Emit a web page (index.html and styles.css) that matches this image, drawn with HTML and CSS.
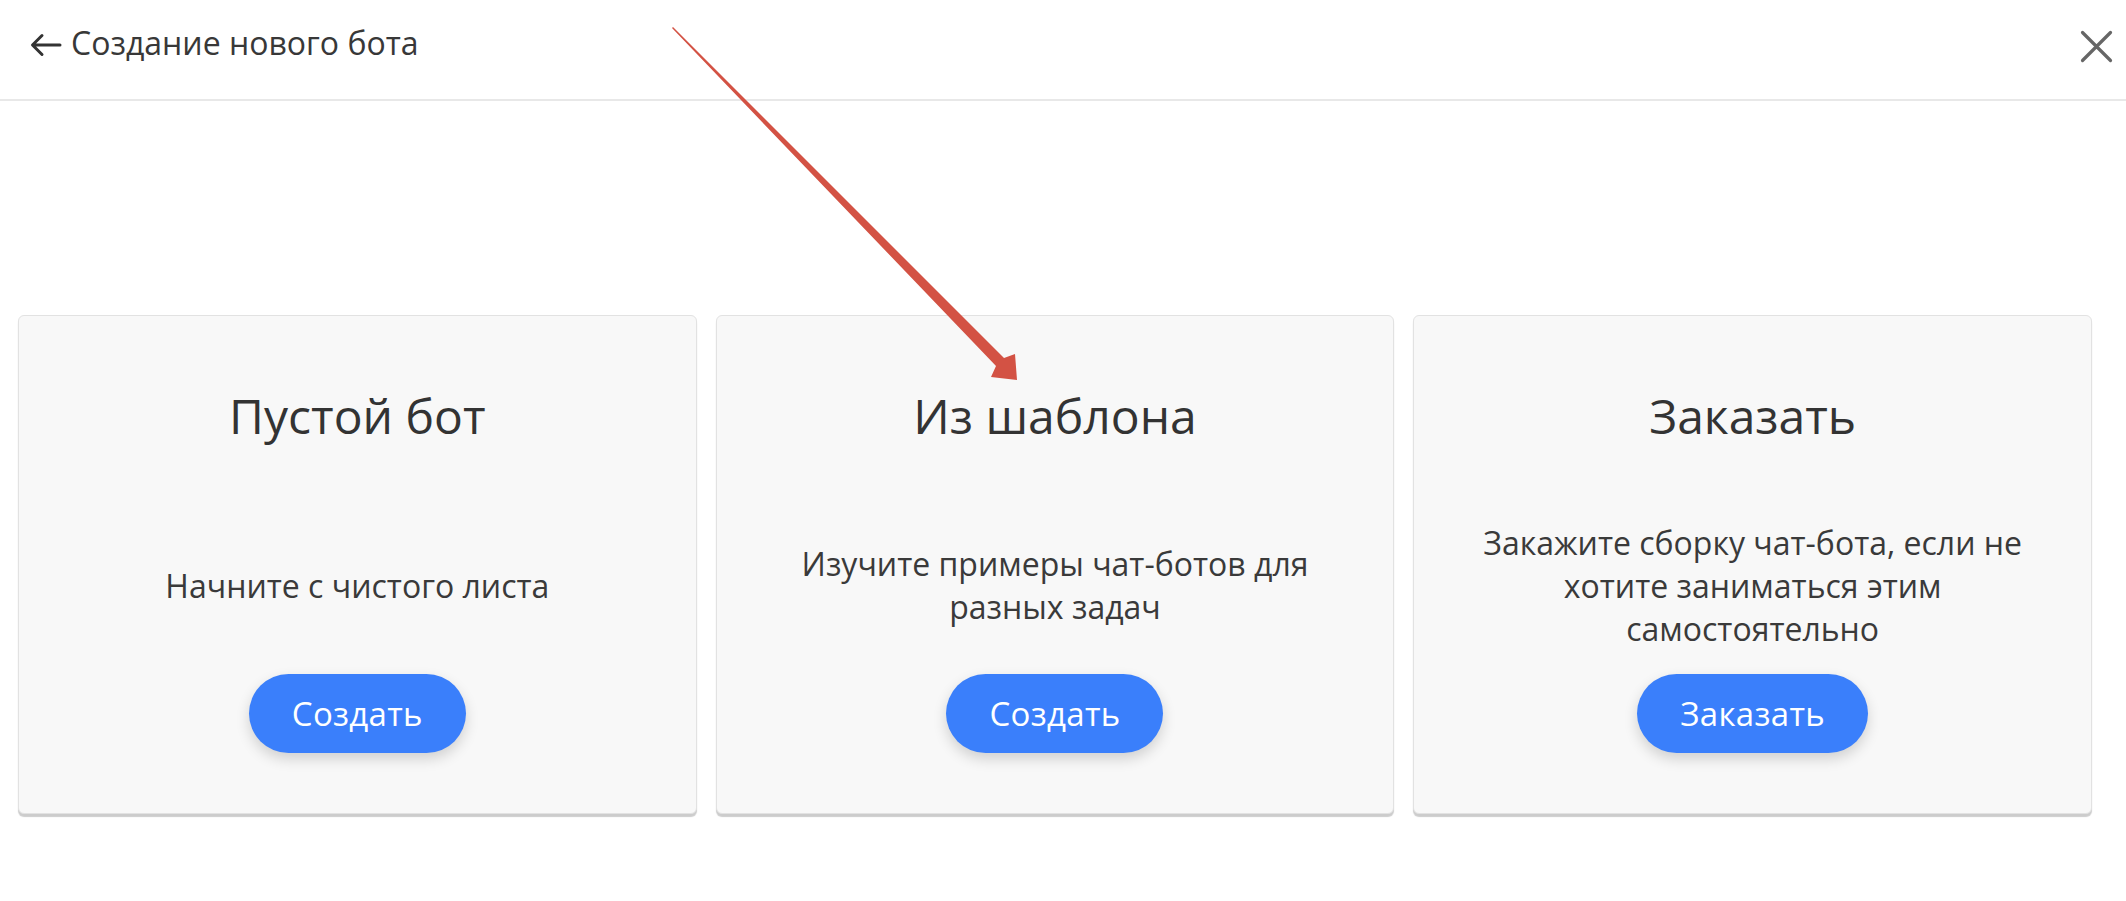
FILE: index.html
```html
<!DOCTYPE html>
<html lang="ru">
<head>
<meta charset="utf-8">
<title>Создание нового бота</title>
<link rel="stylesheet" href="styles.css">
</head>
<body>
<header class="topbar">
  <div class="back">
    <svg class="back-icon" width="32" height="24" viewBox="0 0 32 24" aria-hidden="true">
      <path d="M30 12H3M12 2.5L2.5 12L12 21.5" fill="none" stroke="#333" stroke-width="3" stroke-linecap="round" stroke-linejoin="round"/>
    </svg>
    <span class="back-title">Создание нового бота</span>
  </div>
  <svg class="close-icon" width="33" height="33" viewBox="0 0 33 33" aria-hidden="true">
    <path d="M2.5 2.5L30.5 30.5M30.5 2.5L2.5 30.5" fill="none" stroke="#666" stroke-width="3.2" stroke-linecap="round"/>
  </svg>
</header>
<main class="content">
  <div class="cards">
    <section class="card">
      <h2 class="card-title">Пустой бот</h2>
      <div class="card-body"><p class="card-text">Начните с чистого листа</p></div>
      <button class="card-btn">Создать</button>
    </section>
    <section class="card">
      <h2 class="card-title">Из шаблона</h2>
      <div class="card-body"><p class="card-text">Изучите примеры чат-ботов для<br>разных задач</p></div>
      <button class="card-btn">Создать</button>
    </section>
    <section class="card">
      <h2 class="card-title">Заказать</h2>
      <div class="card-body"><p class="card-text">Закажите сборку чат-бота, если не<br>хотите заниматься этим<br>самостоятельно</p></div>
      <button class="card-btn">Заказать</button>
    </section>
  </div>
</main>
<svg class="annotation" width="2126" height="901" viewBox="0 0 2126 901" aria-hidden="true">
  <polygon points="673,27 1004,358 1015,354 1017,380 991,377 996,366 672,28" fill="#d35244"/>
</svg>
</body>
</html>
```

FILE: styles.css
```css
* { box-sizing: border-box; }
html, body { margin: 0; padding: 0; }
body {
  background: #ffffff;
  font-family: "Open Sans", "Noto Sans", sans-serif;
  color: #333333;
  width: 2126px;
  height: 901px;
  overflow: hidden;
  position: relative;
}
.topbar {
  height: 101px;
  border-bottom: 2px solid #e8e8e8;
  display: flex;
  justify-content: space-between;
  align-items: flex-start;
  padding: 0 13px 0 30px;
}
.back {
  display: flex;
  align-items: center;
  gap: 9px;
  padding-top: 21px;
}
.back-icon { display: block; margin-top: 3px; }
.back-title {
  font-size: 32px;
  line-height: 44px;
  color: #383838;
}
.close-icon { display: block; margin-top: 30px; }
.content {
  padding: 214px 34px 0 18px;
}
.cards {
  display: grid;
  grid-template-columns: repeat(3, 1fr);
  gap: 19px;
}
.card {
  height: 499px;
  background: #f8f8f8;
  border: 1px solid #e2e2e2;
  border-radius: 6px;
  box-shadow: 0 3px 1px rgba(0, 0, 0, 0.2);
  display: flex;
  flex-direction: column;
  align-items: center;
  padding: 72px 20px 60px;
  text-align: center;
}
.card-title {
  margin: 0;
  font-size: 48px;
  font-weight: 400;
  line-height: 56px;
  color: #333333;
}
.card-body {
  flex: 1;
  display: flex;
  align-items: center;
  justify-content: center;
  padding-top: 52px;
}
.card-text {
  margin: 0;
  font-size: 32px;
  line-height: 43px;
  color: #3a3a3a;
}
.card-btn {
  height: 79px;
  padding: 0 43px;
  border: none;
  border-radius: 40px;
  background: #3a7ffb;
  color: #ffffff;
  font-family: "Open Sans", "Noto Sans", sans-serif;
  font-size: 33px;
  letter-spacing: 0.3px;
  box-shadow: 0 6px 14px rgba(0, 0, 0, 0.16);
  cursor: pointer;
}
.annotation {
  position: absolute;
  left: 0;
  top: 0;
  pointer-events: none;
}
```
